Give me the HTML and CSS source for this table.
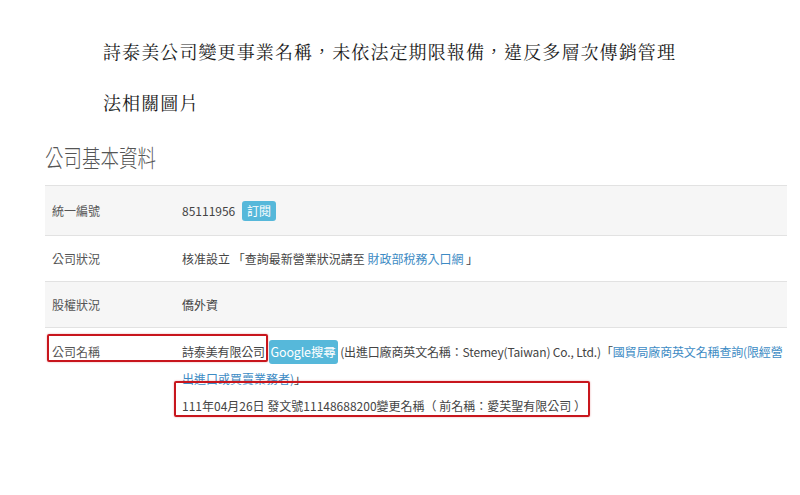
FILE: index.html
```html
<!DOCTYPE html>
<html lang="zh-Hant">
<head>
  <meta charset="UTF-8" />
  <meta name="viewport" content="width=device-width, initial-scale=1.0" />
  <title>詩泰美公司變更事業名稱</title>
  <link rel="stylesheet" href="styles.css">
</head>
<body>
  <div class="caption">
    <p>詩泰美公司變更事業名稱，未依法定期限報備，違反多層次傳銷管理</p>
    <p>法相關圖片</p>
  </div>

  <h2 class="heading">公司基本資料</h2>

  <div class="panel">
    <table class="info">
      <tr class="striped first">
        <td class="label">統一編號</td>
        <td class="value">85111956 <span class="badge">訂閱</span></td>
      </tr>
      <tr>
        <td class="label">公司狀況</td>
        <td class="value">核准設立 「查詢最新營業狀況請至 <a href="#">財政部稅務入口網</a> 」</td>
      </tr>
      <tr class="striped">
        <td class="label">股權狀況</td>
        <td class="value">僑外資</td>
      </tr>
      <tr class="name-row">
        <td class="label">公司名稱</td>
        <td class="value"><span class="nowrap">詩泰美有限公司 <span class="badge badge-google">Google搜尋</span> (出進口廠商英文名稱：Stemey(Taiwan) Co., Ltd.)「<a href="#">國貿局廠商英文名稱查詢(限經營</a></span><br><a href="#">出進口或買賣業務者)</a>」<br>111年04月26日 發文號11148688200變更名稱（ 前名稱：愛芙聖有限公司 ）</td>
      </tr>
    </table>
    <div class="mark mark-name"></div>
    <div class="mark mark-change"></div>
  </div>
</body>
</html>
```

FILE: styles.css
```css
body {
  margin: 0;
  background: #fff;
  font-family: "Noto Sans CJK TC", "Noto Sans", sans-serif;
}
.caption {
  padding: 26px 0 0 103px;
  font-family: "Noto Serif CJK TC", "Liberation Serif", "Noto Sans CJK TC", serif;
  font-size: 18px;
  letter-spacing: 1.1px;
  line-height: 51px;
  color: #1a1a1a;
}
.caption p {
  margin: 0;
}
.heading {
  margin: 9px 0 8px 45px;
  font-size: 24px;
  font-weight: 300;
  line-height: 40px;
  color: #555;
  transform: scaleX(0.77);
  transform-origin: left center;
}
.panel {
  position: relative;
  padding: 0 13px 0 45px;
}
.info {
  width: 100%;
  table-layout: fixed;
  border-collapse: collapse;
  font-size: 12px;
  color: #555;
}
.info td {
  border-top: 1px solid #e2e2e2;
  padding: 12px 0 12px 7px;
  line-height: 21px;
  vertical-align: top;
}
.info .first td {
  padding-top: 14px;
  padding-bottom: 14px;
}
.info .striped {
  background: #f6f6f6;
}
.info .label {
  width: 130px;
}
.info .value {
  padding-left: 0;
  color: #444;
}
.info a {
  color: #3d8bc4;
  text-decoration: none;
}
.nowrap {
  white-space: nowrap;
  letter-spacing: -0.15px;
}
.info .name-row td {
  padding-top: 10px;
  padding-bottom: 20px;
  line-height: 27px;
}
.badge {
  display: inline-block;
  margin-left: 4px;
  padding: 0 5px;
  border-radius: 3px;
  background: #56b8da;
  color: #fff;
  font-size: 12px;
  line-height: 20px;
}
.badge-google {
  margin-left: 1px;
  padding: 1px 2px;
  font-size: 12.5px;
  line-height: 22px;
}
.mark {
  position: absolute;
  box-sizing: border-box;
  border: 2.5px solid #c8161d;
  border-radius: 2px;
  box-shadow: 0 0 2px rgba(200, 22, 29, 0.4);
}
.mark-name {
  left: 47px;
  top: 149px;
  width: 221px;
  height: 28px;
}
.mark-change {
  left: 174px;
  top: 196px;
  width: 416px;
  height: 36px;
}
```
